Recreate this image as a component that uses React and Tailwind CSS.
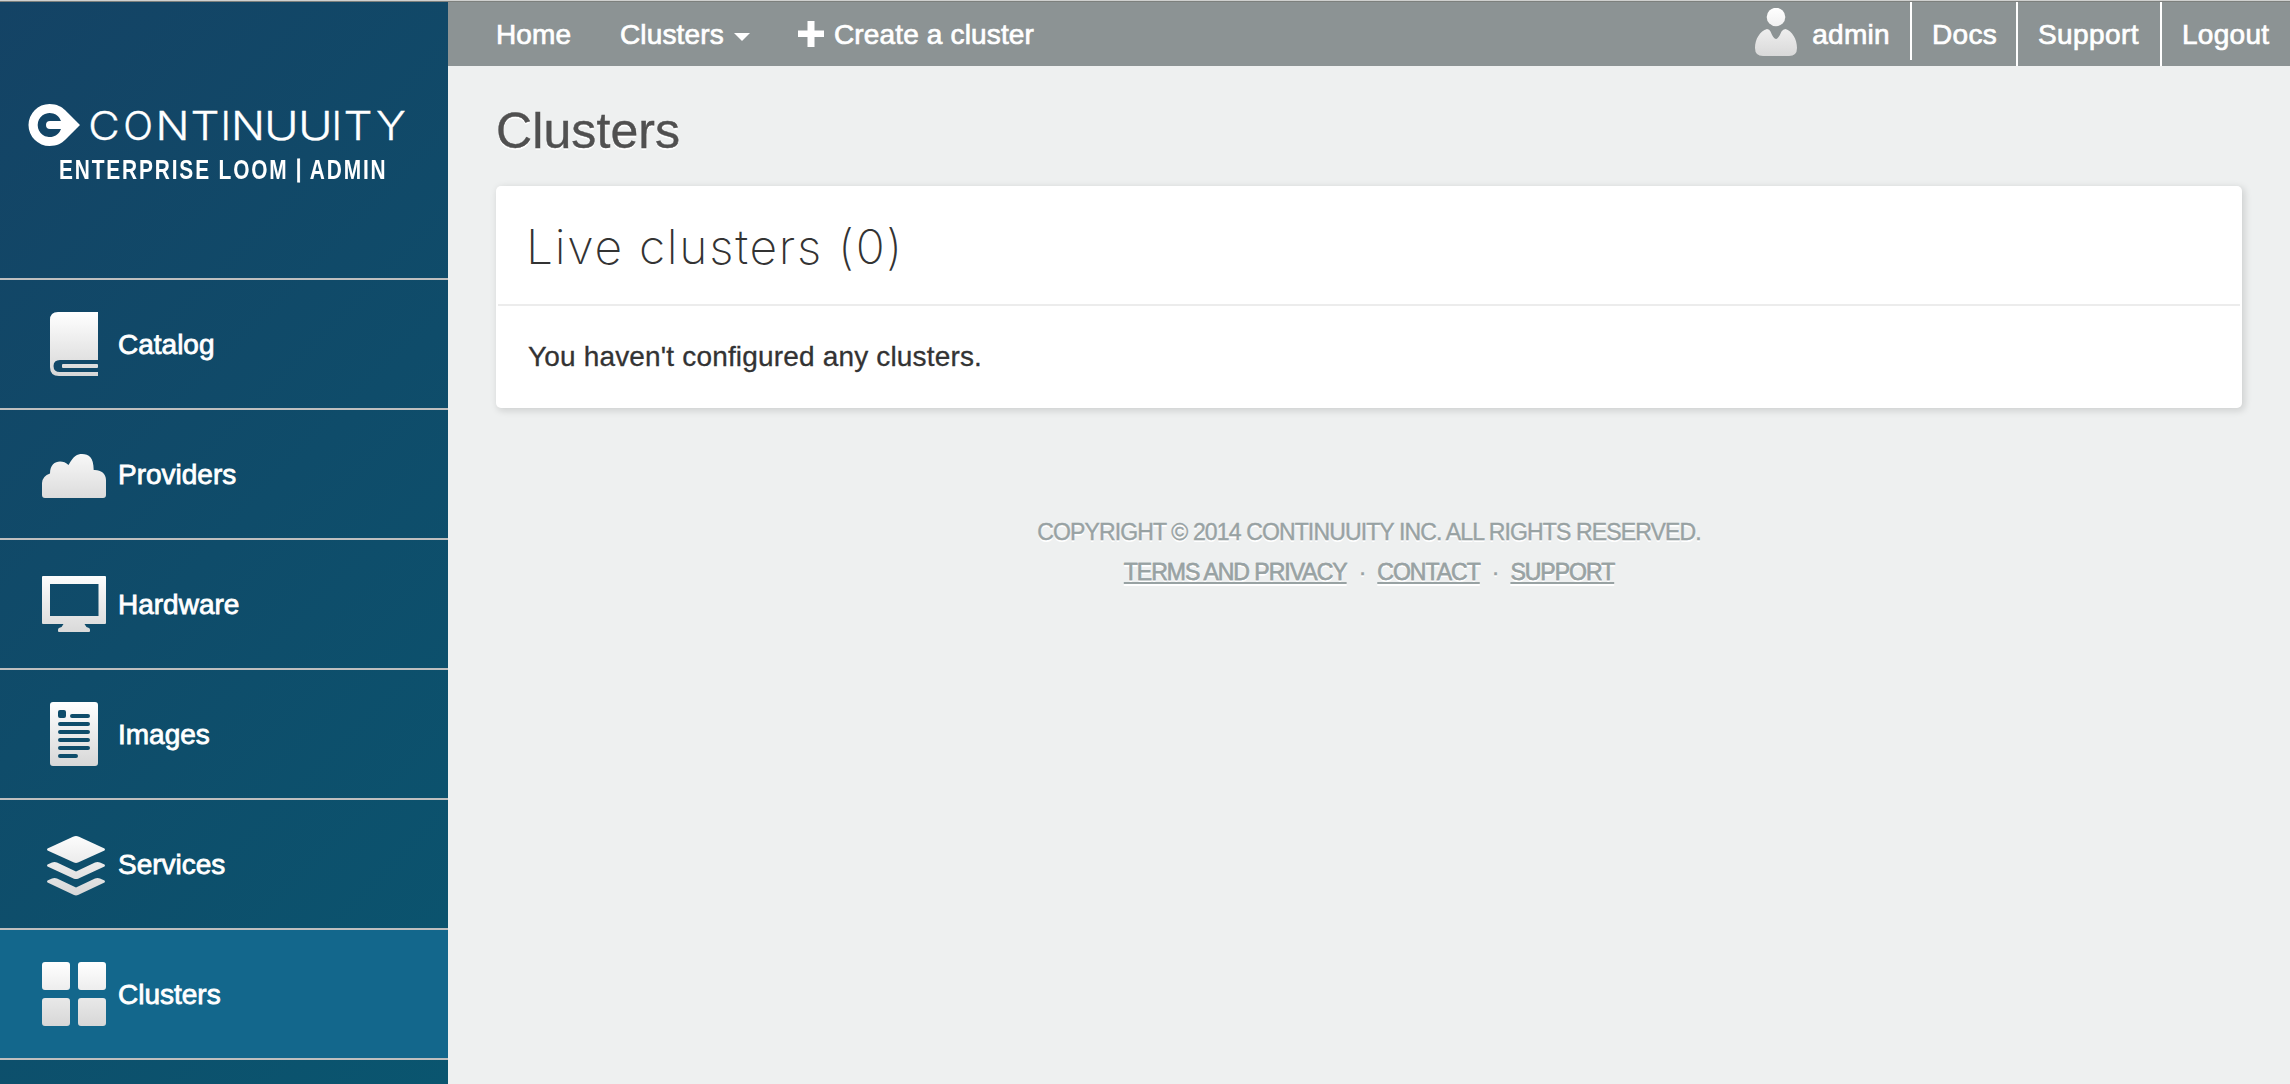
const icons = {
  catalog: (
    <>
      <path d="M16 0H56V48H18Q11.500 48 11.500 54T18 60H56V64H17Q8 64 8 55V8Q8 0 16 0Z" />
      <rect x="20" y="52" width="36" height="4" rx="1" />
    </>
  ),
  providers: (
    <path d="M3 56Q0 56 0 53V41Q0.500 34 8 31.500C8 18.500 20 17 26.500 23C32 13.500 35 12 40 12C47 12 51.500 15 51.700 28C58 27.500 64 31 64 38V53Q64 56 61 56Z" />
  ),
  hardware: (
    <path
      fillRule="evenodd"
      d="M1 4H63Q64 4 64 5V51Q64 52 63 52H42.500Q43.500 55 47 56Q48 56.500 48 58V59Q48 60 47 60H17Q16 60 16 59V58Q16 56.500 17 56Q20.500 55 21.500 52H1Q0 52 0 51V5Q0 4 1 4ZM8 12V44H56.500V12Z"
    />
  ),
  images: (
    <path
      fillRule="evenodd"
      d="M11 0H53Q56 0 56 3V61Q56 64 53 64H11Q8 64 8 61V3Q8 0 11 0Z
      M18 8Q16 8 16 10V14Q16 16 18 16H22Q24 16 24 14V10Q24 8 22 8Z
      M30 12a2 2 0 0 0 0 4H46a2 2 0 0 0 0-4Z
      M18 20a2 2 0 0 0 0 4H46a2 2 0 0 0 0-4Z
      M18 28a2 2 0 0 0 0 4H46a2 2 0 0 0 0-4Z
      M18 36a2 2 0 0 0 0 4H46a2 2 0 0 0 0-4Z
      M18 44a2 2 0 0 0 0 4H46a2 2 0 0 0 0-4Z
      M18 52a2 2 0 0 0 0 4H34a2 2 0 0 0 0-4Z"
    />
  ),
  services: (
    <>
      <path d="M5.500 16.500L31 4.700Q34 3.500 37 4.700L62.500 16.500Q63.500 17.500 62.500 18.500L36 30.500Q34 31.300 32 30.500L5.500 18.500Q4.500 17.500 5.500 16.500Z" />
      <path d="M5.500 32.500L10 30.500Q12.500 29.300 15 30.500L34 39.500L53 30.500Q55.500 29.300 58 30.500L62.500 32.500Q63.500 33.500 62.500 34.500L36 46.700Q34 47.500 32 46.700L5.500 34.500Q4.500 33.500 5.500 32.500Z" />
      <path d="M5.500 48.500L10 46.500Q12.500 45.300 15 46.500L34 55.500L53 46.500Q55.500 45.300 58 46.500L62.500 48.500Q63.500 49.500 62.500 50.500L36 63Q34 63.800 32 63L5.500 50.500Q4.500 49.500 5.500 48.500Z" />
    </>
  ),
  clusters: (
    <path d="M3 0H25Q28 0 28 3V25Q28 28 25 28H3Q0 28 0 25V3Q0 0 3 0ZM39 0H61Q64 0 64 3V25Q64 28 61 28H39Q36 28 36 25V3Q36 0 39 0ZM3 36H25Q28 36 28 39V61Q28 64 25 64H3Q0 64 0 61V39Q0 36 3 36ZM39 36H61Q64 36 64 39V61Q64 64 61 64H39Q36 64 36 61V39Q36 36 39 36Z" />
  ),
};

const items = [
  ["catalog", "Catalog"],
  ["providers", "Providers"],
  ["hardware", "Hardware"],
  ["images", "Images"],
  ["services", "Services"],
  ["clusters", "Clusters"],
];

// Wordmark letters: glyph, horizontal centre, horizontal stretch.
const wordmark = [
  ["C", 104, 1.08],
  ["O", 138, 0.98],
  ["N", 172.5, 1.12],
  ["T", 205, 1.14],
  ["I", 225.7, 1],
  ["N", 248, 1.12],
  ["U", 281.3, 1.18],
  ["U", 315.3, 1.18],
  ["I", 336.7, 1],
  ["T", 358, 1.14],
  ["Y", 390.8, 1.12],
];

function NavIcon({ name }) {
  return (
    <svg width="64" height="64" viewBox="0 0 64 64" className="shrink-0" fill={`url(#fade-${name})`}>
      <defs>
        <linearGradient id={`fade-${name}`} gradientUnits="userSpaceOnUse" x1="0" y1="0" x2="0" y2="64">
          <stop offset="0" stopColor="#ffffff" />
          <stop offset="1" stopColor="#d7d7d7" />
        </linearGradient>
      </defs>
      {icons[name]}
    </svg>
  );
}

function Logo() {
  return (
    <div className="flex h-[278px] flex-col border-b-2 border-[#bfbfbf] pt-[90px]">
      <svg width="448" height="62" viewBox="0 92 448 62" className="shrink-0 overflow-visible" fill="#fff">
        <path
          fillRule="evenodd"
          d="M49.500 104C57 104 62 107 65 110L80 125L65 140C62 143 57 146 49.500 146A21 21 0 0 1 49.500 104ZM61 121A12 12 0 1 0 61 129H50A4 4 0 0 1 50 121Z"
        />
        <g fontFamily="Inter, sans-serif" fontSize="40" fontWeight="300" textAnchor="middle" stroke="#fff" strokeWidth="0.3">
          {wordmark.map(([letter, x, stretch], i) => (
            <text key={i} transform={`translate(${x} 139.500) scale(${stretch} 1)`}>
              {letter}
            </text>
          ))}
        </g>
      </svg>
      <div className="flex h-8 items-center pl-[59px]">
        <span className="origin-left scale-x-[0.745] text-[28px] leading-8 font-bold tracking-[2.5px] whitespace-nowrap">
          ENTERPRISE LOOM <span className="relative -top-[2px] text-[23px] [-webkit-text-stroke:0.8px_white]">|</span> ADMIN
        </span>
      </div>
    </div>
  );
}

function Sidebar() {
  return (
    <aside className="flex w-[448px] shrink-0 flex-col overflow-hidden bg-[linear-gradient(135deg,#144365_0%,#0a556f_100%)] text-white">
      <Logo />
      {items.map(([name, label]) => (
        <a
          key={name}
          className={`flex h-[130px] shrink-0 items-center gap-3 border-b-2 border-[#bfbfbf] pl-[42px] ${
            name === "clusters" ? "bg-[#13678c]" : ""
          }`}
        >
          <NavIcon name={name} />
          <span className="pt-px text-[28px] leading-8 [-webkit-text-stroke:0.8px_white]">{label}</span>
        </a>
      ))}
    </aside>
  );
}

function TopBar() {
  return (
    <nav className="flex h-16 shrink-0 items-start bg-[#8c9394] pl-12 text-[28px] leading-[65px] tracking-[0.15px] whitespace-nowrap text-white [-webkit-text-stroke:0.7px_white]">
      <a className="w-[124px]">Home</a>
      <a className="flex w-[178px] items-center gap-[10px]">
        Clusters
        <span className="mt-1 border-x-8 border-t-8 border-x-transparent border-t-white" />
      </a>
      <a className="flex h-16 items-center gap-[10px]">
        <svg width="26" height="26" viewBox="0 0 26 26" className="-mt-px" fill="#fff">
          <path d="M9.500 0H16.500V9.500H26V16H16.500V26H9.500V16H0V9.500H9.500Z" />
        </svg>
        Create a cluster
      </a>
      <div className="ml-auto flex items-start">
        <a className="flex h-[58px] items-center gap-[14px] border-r-2 border-white pr-5">
          <svg width="43" height="48" viewBox="0 0 43 48" className="mt-px" fill="url(#fade-user)">
            <defs>
              <linearGradient id="fade-user" gradientUnits="userSpaceOnUse" x1="0" y1="0" x2="0" y2="48">
                <stop offset="0" stopColor="#ffffff" />
                <stop offset="1" stopColor="#d9d9d9" />
              </linearGradient>
            </defs>
            <ellipse cx="21" cy="9" rx="9.300" ry="9.200" />
            <path d="M12 21Q14.500 21 15.500 23.500Q18.500 31 21 31Q23.500 31 26.500 23.500Q28 21 30.500 21C37 23 42 31 42 40Q42 48 34 48H8Q0 48 0 40C0 31 5 23 12 21Z" />
          </svg>
          <span className="pt-[7px] tracking-[0.3px]">admin</span>
        </a>
        <a className="h-16 w-[106px] border-r-2 border-white pl-5 tracking-[0.3px]">Docs</a>
        <a className="h-16 w-[144px] border-r-2 border-white pl-5 tracking-[0.4px]">Support</a>
        <a className="h-16 w-32 pl-5 tracking-[0.3px]">Logout</a>
      </div>
    </nav>
  );
}

export default function App() {
  return (
    <div className="flex h-[1084px] w-[2290px] flex-col overflow-hidden bg-[#eef0f0] font-['Liberation_Sans',Arial,sans-serif]">
      <div className="h-0.5 shrink-0 border-b border-[#7d807d] bg-[#cfd0cf]" />
      <div className="flex min-h-0 flex-1">
        <Sidebar />
        <div className="flex min-w-0 flex-1 flex-col">
          <TopBar />
          <main className="px-12">
            <h1 className="mt-[35px] text-[50px] leading-[60px] tracking-[0.1px] text-[#505050] [-webkit-text-stroke:0.4px_#505050] [text-shadow:0_2px_0_#fff]">
              Clusters
            </h1>
            <section className="mt-[25px] h-[222px] rounded-[5px] bg-white p-0.5 text-[#333] shadow-[2px_2px_7px_1px_rgba(0,0,0,0.13)]">
              <h2 className="flex h-[118px] items-center border-b-2 border-[#ececec] pt-[2px] pl-[28px] font-[Inter] text-[48px] font-extralight tracking-[1.7px]">
                Live clusters (0)
              </h2>
              <p className="pt-[33px] pl-[30px] text-[28px] leading-9 tracking-[0.17px] [-webkit-text-stroke:0.3px_#333]">
                You haven't configured any clusters.
              </p>
            </section>
            <footer className="mt-[104px] flex flex-col items-center text-[23px] leading-10 text-[#98a2a3] [text-shadow:0_2px_0_#fff] [-webkit-text-stroke:0.4px_#98a2a3]">
              <p className="tracking-[-0.86px]">COPYRIGHT © 2014 CONTINUUITY INC. ALL RIGHTS RESERVED.</p>
              <p className="flex gap-3 tracking-[-1px]">
                <a className="underline decoration-2 underline-offset-2">TERMS AND PRIVACY</a>
                <span>·</span>
                <a className="underline decoration-2 underline-offset-2">CONTACT</a>
                <span>·</span>
                <a className="underline decoration-2 underline-offset-2">SUPPORT</a>
              </p>
            </footer>
          </main>
        </div>
      </div>
    </div>
  );
}
